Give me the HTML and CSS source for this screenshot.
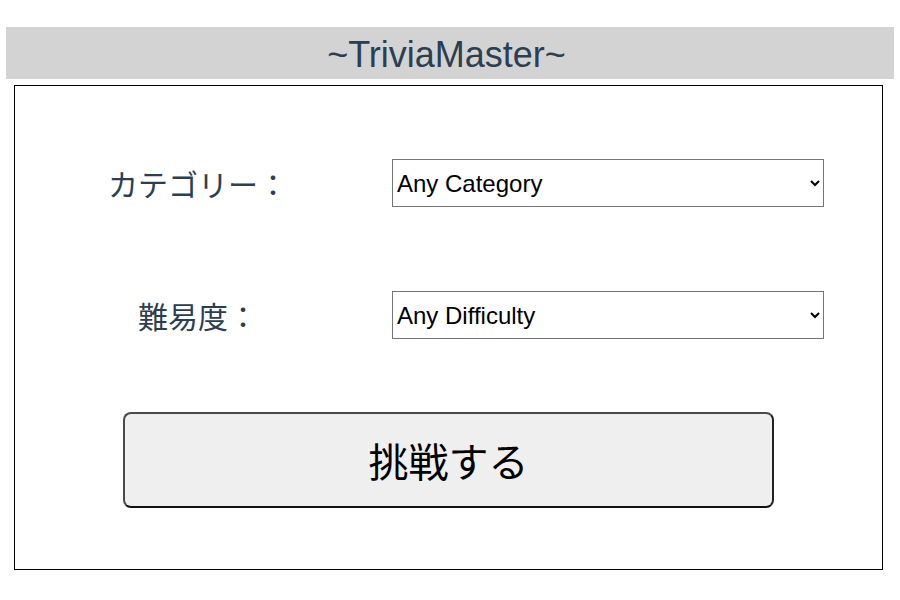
FILE: index.html
```html
<!DOCTYPE html>
<html lang="ja">
<head>
<meta charset="utf-8">
<title>TriviaMaster</title>
<link rel="stylesheet" href="styles.css">
</head>
<body>
  <header class="title-bar">~TriviaMaster~</header>
  <main class="panel">
    <div class="form-grid">
      <label class="field-label" for="category">カテゴリー：</label>
      <select id="category" class="field-select">
        <option>Any Category</option>
      </select>
      <label class="field-label" for="difficulty">難易度：</label>
      <select id="difficulty" class="field-select">
        <option>Any Difficulty</option>
      </select>
    </div>
    <div class="actions">
      <button class="start-btn" type="button">挑戦する</button>
    </div>
  </main>
</body>
</html>
```
FILE: styles.css
```css
html, body {
  background: #ffffff;
}
body {
  margin: 27px 6px 0 6px;
  font-family: "Liberation Sans", Arial, "Noto Sans CJK JP", sans-serif;
}
.title-bar {
  height: 49px;
  padding: 3px 7px 0 0;
  line-height: 49px;
  background: #d3d3d3;
  color: #2c3e50;
  font-size: 36px;
  text-align: center;
}
.panel {
  box-sizing: border-box;
  width: 869px;
  margin: 6px 0 0 8px;
  border: 1px solid #000;
  padding: 73px 0 61px 0;
}
.form-grid {
  display: grid;
  grid-template-columns: 366px 432px;
  grid-auto-rows: 48px;
  column-gap: 11px;
  row-gap: 84px;
  align-items: center;
}
.field-label {
  text-align: center;
  font-family: "Noto Sans CJK JP", "Liberation Sans", sans-serif;
  font-size: 30px;
  color: #2c3e50;
  line-height: 48px;
}
.field-select {
  box-sizing: border-box;
  width: 432px;
  height: 48px;
  font-family: "Liberation Sans", Arial, sans-serif;
  font-size: 24px;
  color: #000;
  background: #fff;
  border: 1px solid #767676;
  border-radius: 0;
  padding: 0;
}
.actions {
  margin-top: 73px;
  display: flex;
  justify-content: center;
}
.start-btn {
  box-sizing: border-box;
  width: 651px;
  height: 96px;
  background: #efefef;
  border: 2px solid #4a4a4a;
  border-bottom-color: #111;
  border-right-color: #222;
  border-radius: 8px;
  font-family: "Noto Sans CJK JP", sans-serif;
  font-size: 40px;
  color: #000;
}
```
